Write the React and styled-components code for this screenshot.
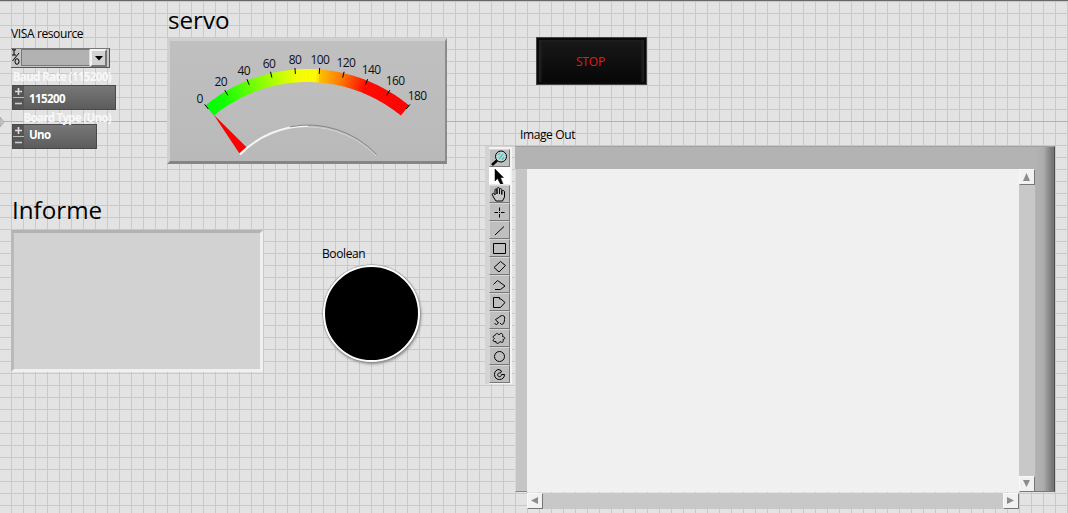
import styled, { createGlobalStyle } from 'styled-components';

const GlobalStyle = createGlobalStyle`
  * {
    box-sizing: border-box;
  }
  body {
    margin: 0;
    overflow: hidden;
    font-family: 'Open Sans', 'Noto Sans', sans-serif;
    font-size: 12px;
    color: #000;
  }
`;

const Panel = styled.div`
  position: relative;
  display: flex;
  width: 1068px;
  height: 513px;
  overflow: hidden;
  border-top: 1px solid #676767;
  background-color: #e3e3e3;
  background-image: linear-gradient(#b2b2b2, #b2b2b2),
    linear-gradient(to right, #c9c9c9 1px, transparent 1px),
    linear-gradient(#c9c9c9 1px, transparent 1px);
  background-size: 100% 1px, 12px 12px, 12px 12px;
  background-position: 0 120px, 11px 0, 0 0;
  background-repeat: no-repeat, repeat, repeat;
`;
const OriginMark = styled.svg`
  position: absolute;
  left: 0;
  top: 114px;
`;
const Left = styled.div`
  width: 485px;
  flex: none;
`;
const TopRow = styled.div`
  display: flex;
  height: 193px;
`;
const BottomRow = styled.div`
  display: flex;
`;
const Config = styled.div`
  width: 167px;
  flex: none;
  padding: 25px 0 0 11px;
`;
const Label = styled.div`
  height: 16px;
  line-height: 16px;
  white-space: nowrap;
  letter-spacing: ${(p) => p.$spacing || '-0.38px'};
`;
const Title = styled.div`
  height: 32px;
  line-height: 32px;
  padding-left: ${(p) => p.$indent || '0'};
  font-size: 24.2px;
  white-space: nowrap;
`;
const GhostLabel = styled.div`
  width: 100px;
  height: ${(p) => p.$height};
  line-height: 16px;
  font-size: 11.5px;
  font-weight: 700;
  color: #f8f8f8;
  text-align: right;
  white-space: nowrap;
  letter-spacing: ${(p) => p.$spacing};
`;

const Visa = styled.div`
  display: flex;
  width: 99px;
  height: 20px;
  margin: 6px 0 1px;
  background: #c6c6c6;
  border-top: 1px solid #777;
  border-right: 1px solid #555;
  border-bottom: 1px solid #555;
`;
const VisaField = styled.div`
  width: 69px;
  margin-bottom: 1px;
  background: #b2b2b2;
  border: 1px solid #777;
  border-right-color: #ddd;
`;
const DropButton = styled.div`
  display: flex;
  align-items: center;
  justify-content: center;
  width: 17px;
  height: 18px;
  background: #d2d2d2;
  border: 2px solid #f4f4f4;
  border-right-color: #777;
  border-bottom-color: #777;
`;

const Spinner = styled.div`
  display: flex;
  width: ${(p) => p.$width};
  height: 25px;
  margin-left: 1px;
  border: 1px solid #4a4a4a;
  background: linear-gradient(#777, #5c5c5c);
  color: #fff;
  font-size: 11.5px;
  font-weight: 700;
  letter-spacing: -0.6px;
`;
const Steps = styled.div`
  display: flex;
  flex-direction: column;
  width: 11px;
  margin-right: 5px;
`;
const Step = styled.div`
  display: flex;
  align-items: center;
  justify-content: center;
  height: 12px;
  background: #555;
  &:first-child {
    border-bottom: 1px solid #bbb;
  }
`;
const SpinnerValue = styled.div`
  line-height: ${(p) => p.$line};
  height: 20px;
`;

const Servo = styled.div`
  padding-top: 3px;
`;
const GaugeFrame = styled.div`
  width: 280px;
  height: 126px;
  margin-top: 2px;
  background: linear-gradient(#c0c0c0, #b9b9b9);
  border: 3px solid;
  border-color: #d0d0d0 #8b8b8b #858585 #d0d0d0;
  border-right-width: 2px;
`;
const Dial = styled.svg`
  display: block;
  font-size: 12px;
  letter-spacing: -0.6px;
`;

const Informe = styled.div`
  width: 322px;
  flex: none;
  padding-left: 12px;
`;
const TextBox = styled.div`
  width: 252px;
  height: 142px;
  margin: 4px 0 0 -1px;
  background: #d2d2d2;
  border: 3px solid;
  border-color: #b3b3b3 #f0f0f0 #f0f0f0 #b9b9b9;
`;
const BooleanBox = styled.div`
  padding-top: 52px;
`;
const Led = styled.div`
  width: 97px;
  height: 97px;
  margin: 3px 0 0 1px;
  border-radius: 50%;
  background: #000;
  border: 2px solid #fff;
  box-shadow: 0 0 1px 0.5px #8a8a8a, 1px 2px 3px #888;
`;

const Right = styled.div`
  flex: 1;
`;
const StopButton = styled.div`
  display: flex;
  align-items: center;
  justify-content: center;
  width: 111px;
  height: 48px;
  margin: 36px 0 0 51px;
  padding-right: 2px;
  background: linear-gradient(#191919, #060606);
  border: 1px solid #444;
  box-shadow: inset 0 0 0 2px #090909, inset 5px 0 3px -1px #262626,
    inset -5px 0 3px -1px #262626, inset 0 5px 3px -2px #222;
  color: #ee1414;
  letter-spacing: -0.15px;
`;
const ImageLabel = styled(Label)`
  margin: 42px 0 3px 35px;
`;
const Viewer = styled.div`
  display: flex;
`;
const Palette = styled.div`
  width: 30px;
  height: 238px;
  flex: none;
  padding: 2px 0 0 3px;
  border-left: 1px solid #d2d2d2;
  border-top: 1px solid #d2d2d2;
  background: linear-gradient(
    to right,
    #d4d4d4 0 3px,
    #f3f3f3 3px 26px,
    transparent 26px
  );
`;
const Tool = styled.div`
  width: 21px;
  height: 18px;
  background: ${(p) => (p.$active ? '#fff' : '#bfbfbf')};
  border: 1px solid;
  border-color: ${(p) =>
    p.$active ? '#fff #fff #e8e8e8 #fff' : '#d6d6d6 #777 #777 #d6d6d6'};
  svg {
    display: block;
  }
`;
const Frame = styled.div`
  display: grid;
  grid-template-columns: 12px 492px 16px 20px;
  grid-template-rows: 23px 323px 17px;
  width: 540px;
`;
const FrameTop = styled.div`
  grid-column: 1 / 4;
  background: #b3b3b3;
  border-top: 1px solid #a0a0a0;
`;
const FrameLeft = styled.div`
  background: #c5c5c5;
  border-bottom: 1px solid #888;
  border-left: 1px solid #d8d8d8;
`;
const FrameRight = styled.div`
  grid-column: 4;
  grid-row: 1 / 3;
  background: linear-gradient(to right, #b3b3b3, #acacac 45%, #777 90%);
  border-top: 1px solid #a0a0a0;
  border-right: 1px solid #4d4d4d;
  border-bottom: 1px solid #777;
`;
const Canvas = styled.div`
  background: #f0f0f0;
`;
const Scrollbar = styled.div`
  display: flex;
  flex-direction: ${(p) => (p.$vertical ? 'column' : 'row')};
  justify-content: space-between;
  background: #c8c8c8;
  grid-column: ${(p) => (p.$vertical ? 3 : 2)};
  ${(p) => !p.$vertical && 'padding-top: 1px; background-clip: content-box;'}
`;
const ScrollButton = styled.div`
  display: flex;
  align-items: center;
  justify-content: center;
  width: 16px;
  height: 16px;
  padding: 0 1px 1px 0;
  background: #f1f1f1;
  border: 1px solid #f8f8f8;
  border-right-color: #777;
  border-bottom-color: #777;
`;

// dial geometry
const CX = 307.3;
const CY = 229;
const SWEEP = 39.5;

const point = (value, r) => {
  const a = ((-SWEEP + (value / 180) * SWEEP * 2) * Math.PI) / 180;
  return [CX + r * Math.sin(a), CY - r * Math.cos(a)];
};

const stops = [
  [0, [0, 255, 0]],
  [15, [15, 255, 0]],
  [50, [135, 255, 0]],
  [80, [240, 255, 0]],
  [98, [255, 250, 0]],
  [101, [255, 190, 0]],
  [120, [255, 115, 0]],
  [140, [255, 10, 0]],
  [180, [255, 0, 0]],
];

const colorAt = (v) => {
  const i = Math.max(1, stops.findIndex((s) => s[0] >= v));
  const [v0, c0] = stops[i - 1];
  const [v1, c1] = stops[i];
  const t = (v - v0) / (v1 - v0);
  return `rgb(${c0.map((c, k) => Math.round(c + (c1[k] - c) * t)).join(',')})`;
};

const scale = [
  [0, 199.7, 103],
  [20, 220.7, 86],
  [40, 243.8, 75],
  [60, 269, 68],
  [80, 295, 64],
  [100, 320, 64],
  [120, 346, 67],
  [140, 371.2, 74],
  [160, 395.2, 85],
  [180, 417.2, 100],
];

const segments = Array.from({ length: 90 }, (_, i) => i * 2);

const Gauge = () => (
  <Dial width='275' height='120' viewBox='170 41 275 120'>
    {segments.map((v) => {
      const end = Math.min(180, v + 2.3);
      const pts = [
        point(v, 160),
        point(end, 160),
        point(end, 147),
        point(v, 147),
      ];
      return <polygon key={v} points={pts.join(' ')} fill={colorAt(v + 1)} />;
    })}
    {scale.map(([v, x, y]) => {
      const [x1, y1] = point(v, 161.5);
      const [x2, y2] = point(v, 155.5);
      return (
        <g key={v}>
          <line x1={x1} y1={y1} x2={x2} y2={y2} stroke='#000' />
          <text x={x} y={y} textAnchor='middle' fill='#111'>
            {v}
          </text>
        </g>
      );
    })}
    <path
      d='M240 154.5A94 94 0 0 1 308 126'
      fill='none'
      stroke='#f4f4f4'
      strokeWidth='2.2'
    />
    <path
      d='M290 126.8A94 94 0 0 1 376.5 154.5'
      fill='none'
      stroke='#858585'
      strokeWidth='1'
    />
    <path
      d='M308 127A94 94 0 0 1 376 156'
      fill='none'
      stroke='#d2d2d2'
      strokeWidth='1'
    />
    <path d='M213.5 114.5L246.3 147L239.3 153.3Z' fill='#f00' />
  </Dial>
);

const toolIcons = [
  <g>
    <path d='M8 10.5L3 15' strokeWidth='2.6' />
    <circle cx='12' cy='6.5' r='5.5' fill='#c5d5d5' />
    <path d='M9 5L11 3M10 9L14 4M13 10L15 7' stroke='#4cc' strokeWidth='1.4' />
  </g>,
  <path
    d='M6 1V13L8.5 10.5L11.5 16H14L11.5 9.5H14.5Z'
    fill='#000'
    strokeWidth='.5'
  />,
  <path
    d='M7 15L5 12L3.3 8.8C3 7 5 6.7 6 9V4C6.2 2.5 7.8 2.5 8 4V8V2.7C8.3 1.2 10.2 1.2 10.5 2.7V8V3.5C10.8 2.2 12.6 2.3 12.8 3.7V8.5V5.3C13.2 4.2 15.3 4.3 15.5 5.6V11L13.5 15Z'
    fill='#c8c8c8'
  />,
  <path d='M10.5 3.5V7M10.5 10V13.5M5.5 8.5H9M12 8.5H15.5M10 8.5H11' />,
  <path d='M6 13L15 4.5' />,
  <path d='M4.5 3.5H16.5V13.5H4.5Z' />,
  <path d='M5 9.5L11.5 3.5L16.5 7.5L10 14Z' />,
  <path d='M4.5 8.5L8.5 4.5L16 10L11.5 13.5H6' />,
  <path d='M4.5 3.5H10.5V5H12L16 8.5L11.5 13.5H4.5Z' />,
  <path d='M5.5 11.5L7.5 12.5L9.5 11C9.5 9.5 6.5 9 6.5 7.5L9 6C10 5.5 11.5 3.5 13.5 3.5C15.5 3.5 16 6 15.5 7.5C15.5 10 14.5 12.5 12.5 12.5L11 11' />,
  <path d='M6 5.5C6.5 3 9 3 10 5C11.5 2 14.5 3.5 13.5 6.5C16.5 7 16.5 9 14 9.5C15 12.5 13 13 11 11.5C10 14 6.5 14 7 11.5C3.5 12 3.5 10 5.5 8.5C3.5 7.5 4 5.5 6 5.5Z' />,
  <circle cx='10.5' cy='8.5' r='5' />,
  <path d='M10 3.5C7 3.5 5.5 6 5.5 8.5C5.5 12 8 13.5 10.5 13.5C13.5 13.5 15.5 11.5 15.5 8.5H12.5C12.5 11 9.5 11.5 8.8 9.5C8.2 7.5 10 6.5 11.5 7L12.5 5Z' />,
];

const arrows = {
  up: 'M3.5 0L7 8H0Z',
  down: 'M0 0H7L3.5 7Z',
  left: 'M0 3.5L7 0V7Z',
  right: 'M0 0L7 3.5L0 7Z',
};

const Arrow = ({ dir }) => (
  <ScrollButton>
    <svg width='7' height='8'>
      <path d={arrows[dir]} fill='#8c8c8c' />
    </svg>
  </ScrollButton>
);

const StepButtons = () => (
  <Steps>
    <Step>
      <svg width='9' height='9'>
        <path d='M1 4.5H8M4.5 1V8' stroke='#ddd' strokeWidth='1.6' />
      </svg>
    </Step>
    <Step>
      <svg width='9' height='9'>
        <path d='M1 4.5H8' stroke='#ccc' strokeWidth='1.6' />
      </svg>
    </Step>
  </Steps>
);

const App = () => {
  return (
    <Panel>
      <GlobalStyle />
      <OriginMark width='6' height='14'>
        <path d='M0 2L4 7L0 12Z' fill='#c6c6c6' stroke='#aaa' />
      </OriginMark>
      <Left>
        <TopRow>
          <Config>
            <Label>VISA resource</Label>
            <Visa>
              <svg width='10' height='18' fill='none' stroke='#000'>
                <path d='M1 .8H5M3 .8V6M1 6H5M1.5 12L8 4' />
                <ellipse cx='6' cy='12.5' rx='2' ry='2.8' />
              </svg>
              <VisaField />
              <DropButton>
                <svg width='8' height='5'>
                  <path d='M0 0H8L4 4.5Z' />
                </svg>
              </DropButton>
            </Visa>
            <GhostLabel $height='16px' $spacing='-0.6px'>
              Baud Rate (115200)
            </GhostLabel>
            <Spinner $width='104px'>
              <StepButtons />
              <SpinnerValue $line='25px'>115200</SpinnerValue>
            </Spinner>
            <GhostLabel $height='14px' $spacing='-0.7px'>
              Board Type (Uno)
            </GhostLabel>
            <Spinner $width='85px'>
              <StepButtons />
              <SpinnerValue $line='19px'>Uno</SpinnerValue>
            </Spinner>
          </Config>
          <Servo>
            <Title $indent='1px'>servo</Title>
            <GaugeFrame>
              <Gauge />
            </GaugeFrame>
          </Servo>
        </TopRow>
        <BottomRow>
          <Informe>
            <Title>Informe</Title>
            <TextBox />
          </Informe>
          <BooleanBox>
            <Label>Boolean</Label>
            <Led />
          </BooleanBox>
        </BottomRow>
      </Left>
      <Right>
        <StopButton>STOP</StopButton>
        <ImageLabel>Image Out</ImageLabel>
        <Viewer>
          <Palette>
            {toolIcons.map((icon, i) => (
              <Tool key={i} $active={i === 1}>
                <svg
                  width='18'
                  height='16'
                  viewBox='1 0 18 16'
                  fill='none'
                  stroke='#000'
                >
                  {icon}
                </svg>
              </Tool>
            ))}
          </Palette>
          <Frame>
            <FrameTop />
            <FrameRight />
            <FrameLeft />
            <Canvas />
            <Scrollbar $vertical>
              <Arrow dir='up' />
              <Arrow dir='down' />
            </Scrollbar>
            <Scrollbar>
              <Arrow dir='left' />
              <Arrow dir='right' />
            </Scrollbar>
          </Frame>
        </Viewer>
      </Right>
    </Panel>
  );
};

export default App;
